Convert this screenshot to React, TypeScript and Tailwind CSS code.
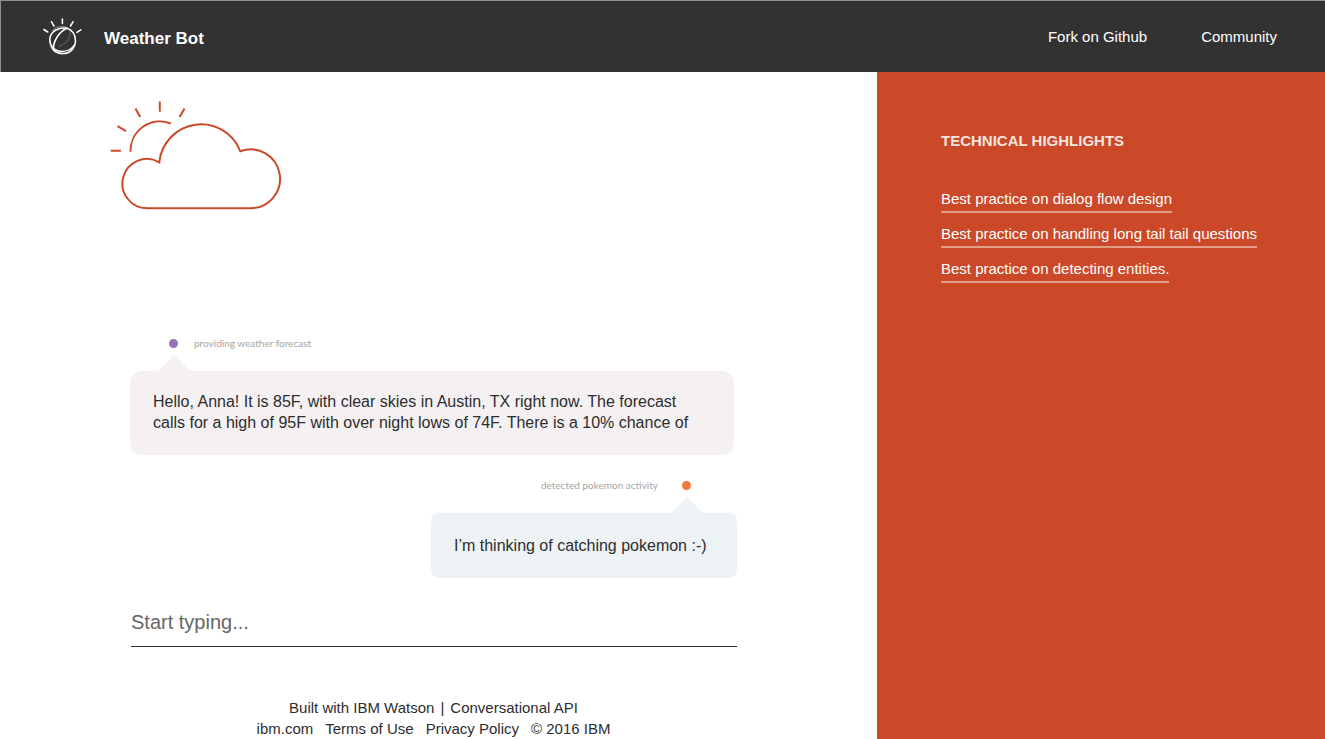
import type { ReactNode } from "react";

function WatsonLogo() {
  return (
    <svg width="40" height="40" viewBox="0 0 40 40" fill="none" stroke="#fff" strokeLinecap="round" aria-hidden="true">
      <path d="M20.4 2v4.400M9.500 4.800l2.500 4.200M31 4.800l-2.500 4.200M1.900 12.500l3.800 2.500M38.800 12.800l-3.900 2.500" strokeWidth="1.600" />
      <path d="M11 13.600C14.500 9.800 20 8.800 25 11" stroke="#6e6e6e" strokeWidth="1.800" />
      <path d="M28 14C29 21 25 26 17 29.500" stroke="#4c4c4c" strokeWidth="2" />
      <path d="M8.300 24C8 29 9.800 32.500 13 34.800" stroke="#a5a5a5" strokeWidth="1.400" />
      <path d="M25 11.300C17 10.200 9.500 13.800 8 20.500C6.800 27.500 11.500 34 19.500 34.400C25 34.500 30 32 32.300 28" strokeWidth="1.500" />
      <path d="M25 11.300C30 12.500 33.500 17.500 33.500 23.500C33.500 31 28 36.600 21 36.600C17 36.600 13.500 35.500 11.300 32.500C11.300 24 17 14.800 25 11.300Z" strokeWidth="1.500" />
    </svg>
  );
}

function CloudIcon() {
  return (
    <svg
      className="-ml-5"
      width="172"
      height="110"
      viewBox="0 0 172 110"
      fill="none"
      stroke="#cb4928"
      strokeWidth="2"
      role="img"
      aria-label="Partly cloudy"
    >
      <path d="M37.300 108.200A24.600 24.600 0 1 1 49.300 62.300A42 42 0 0 1 130.300 51.300A29.400 29.400 0 1 1 139.500 108.200Z" />
      <path d="M20.500 51.800A29.500 29.500 0 0 1 60.800 23.500" />
      <path d="M49.800 1.500V11.700M25.500 8.400L30.200 17M7.500 26.200L16 31.200M.8 50.800H10.900M74.500 8.400L69.600 17" />
    </svg>
  );
}

function Message({ note, side, children }: { note: string; side: "bot" | "user"; children: ReactNode }) {
  const bot = side === "bot";
  return (
    <div className={bot ? "flex flex-col" : "flex min-w-[306px] flex-col self-end"}>
      <div
        className={
          bot
            ? "flex items-center gap-4 pl-[39px] text-[10px] leading-3 text-[#a5a5a5]"
            : "flex flex-row-reverse items-center gap-6 pr-[46px] text-[10px] leading-3 text-[#a5a5a5]"
        }
      >
        <span className={bot ? "size-[9px] rounded-full bg-[#9b72b6]" : "size-[9px] rounded-full bg-[#f47738]"} />
        <span className="font-['Lato',sans-serif]">{note}</span>
      </div>
      <svg
        className={bot ? "mt-1.5 ml-7 fill-[#f5f1f3]" : "mt-1.5 mr-[34px] self-end fill-[#edf3f5]"}
        width="32"
        height="16"
        viewBox="0 0 32 16"
        aria-hidden="true"
      >
        <path d="M0 16L16 0L32 16Z" />
      </svg>
      <p
        className={
          bot
            ? "mr-[3px] rounded-xl bg-[#f5f1f3] px-[23px] pt-5 pb-[22px] text-base leading-[21px]"
            : "rounded-lg bg-[#edf3f5] px-[23px] py-[22px] text-base leading-[21px]"
        }
      >
        {children}
      </p>
    </div>
  );
}

const highlights = [
  "Best practice on dialog flow design",
  "Best practice on handling long tail tail questions",
  "Best practice on detecting entities.",
];

export default function App() {
  return (
    <div className="flex min-h-screen flex-col bg-white font-['Liberation_Sans',Arial,sans-serif] text-[#2d2d2d]">
      <header className="flex h-[72px] items-center justify-between border-t border-l border-[#8f9291] bg-[#323232] pr-12 pl-[41px] text-white">
        <div className="flex items-center gap-[22px]">
          <WatsonLogo />
          <h1 className="pt-1 text-[17px] leading-6 font-bold">Weather Bot</h1>
        </div>
        <nav className="flex gap-[54px] text-[15px] leading-5">
          <a href="#fork">Fork on Github</a>
          <a href="#community">Community</a>
        </nav>
      </header>

      <div className="flex flex-1">
        <main className="flex flex-1 flex-col pt-7 pr-[140px] pl-[130px]">
          <CloudIcon />

          <section className="mt-[127px] flex flex-col gap-6" aria-label="Conversation">
            <Message side="bot" note="providing weather forecast">
              Hello, Anna! It is 85F, with clear skies in Austin, TX right now. The forecast calls for a high of 95F
              with over night lows of 74F. There is a 10% chance of
            </Message>
            <Message side="user" note="detected pokemon activity">
              I’m thinking of catching pokemon :-)
            </Message>
          </section>

          <input
            type="text"
            aria-label="Message"
            placeholder="Start typing..."
            className="mt-7 ml-px h-[41px] border-b border-[#2d2d2d] pb-2 text-xl outline-none placeholder:text-[#666666]"
          />

          <footer className="mt-[50px] text-center text-[15px] leading-[21px]">
            <p className="flex justify-center gap-1.5">
              <span>Built with IBM Watson</span>
              <span>|</span>
              <span>Conversational API</span>
            </p>
            <p className="flex justify-center gap-3">
              <a href="#ibm">ibm.com</a>
              <a href="#terms">Terms of Use</a>
              <a href="#privacy">Privacy Policy</a>
              <span>© 2016 IBM</span>
            </p>
          </footer>
        </main>

        <aside className="w-[448px] bg-[#cb4928] px-16 pt-[59px] text-white">
          <h2 className="text-[15px] leading-5 font-bold text-[#f6e4df]">TECHNICAL HIGHLIGHTS</h2>
          <ul className="mt-[38px] flex flex-col items-start gap-[11px] text-[15px] leading-5 whitespace-nowrap">
            {highlights.map((title) => (
              <li key={title}>
                <a href="#highlight" className="block border-b-2 border-[#e39d8b] pb-0.5">
                  {title}
                </a>
              </li>
            ))}
          </ul>
        </aside>
      </div>
    </div>
  );
}
